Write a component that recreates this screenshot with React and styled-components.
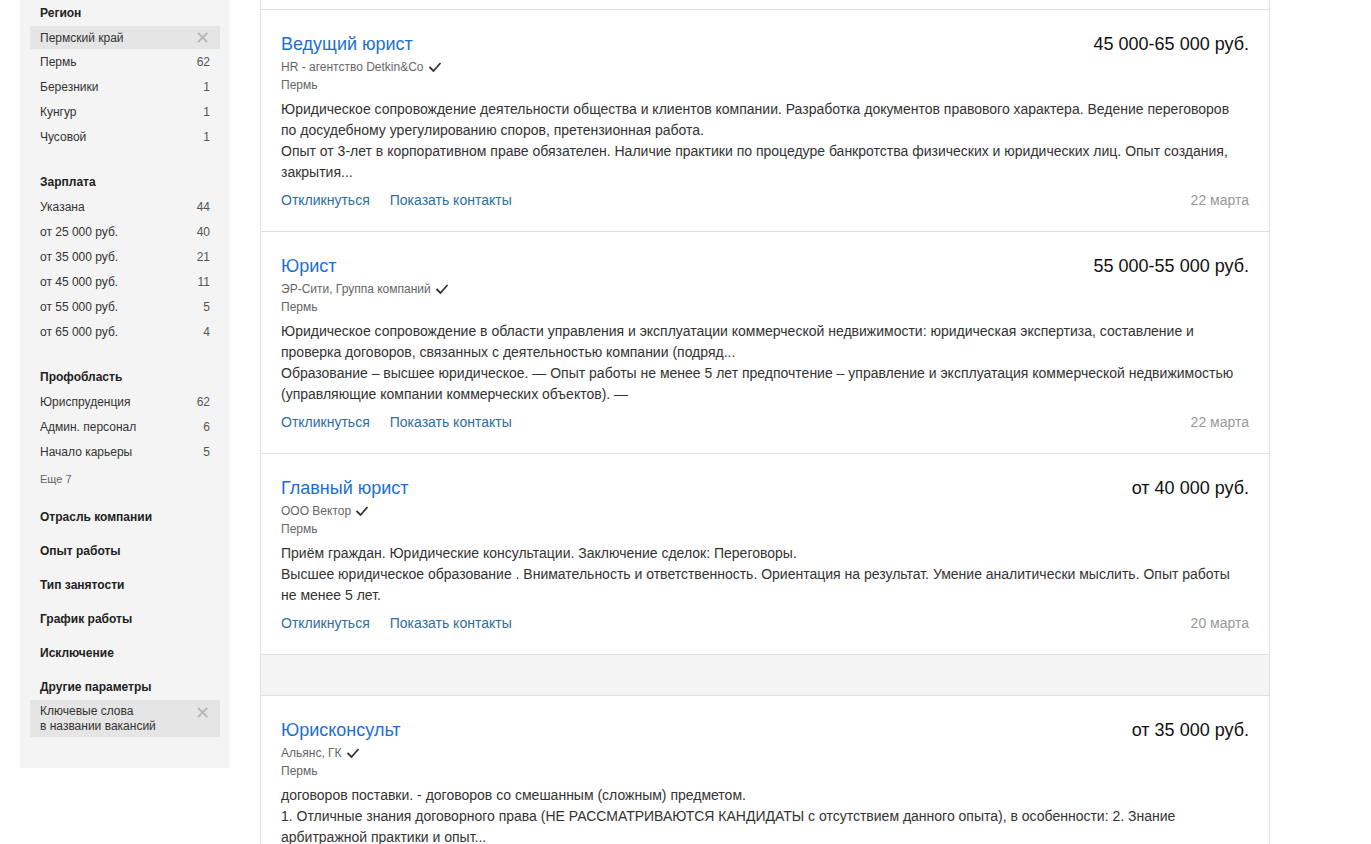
import React from 'react';
import styled, { createGlobalStyle } from 'styled-components';

const GlobalStyle = createGlobalStyle`
  body {
    margin: 0;
    background: #fff;
    font-family: "Liberation Sans", Arial, sans-serif;
    color: #333;
  }
`;

const Page = styled.div`
  display: flex;
  align-items: flex-start;
  padding-left: 20px;
  height: 844px;
  overflow: hidden;
`;

const Sidebar = styled.aside`
  width: 190px;
  flex-shrink: 0;
  background: #f4f4f4;
  padding: 0 10px 31px;
  margin-right: 30px;
`;

const Section = styled.div`
  margin-bottom: ${(p) => p.gap ?? 20}px;
`;

const Heading = styled.div`
  font-size: 12px;
  font-weight: bold;
  color: #222;
  padding: 2px 0 0 10px;
  line-height: ${(p) => (p.lh || 25) - 2}px;
  margin-top: ${(p) => p.mt || 0}px;
`;

const Row = styled.div`
  display: flex;
  justify-content: space-between;
  align-items: center;
  height: ${(p) => (p.active ? 23 : 25)}px;
  margin-top: ${(p) => (p.active ? 1 : 0)}px;
  padding: 0 10px;
  font-size: 12px;
  color: #333;
  background: ${(p) => (p.active ? '#e5e5e5' : 'transparent')};
`;

const Count = styled.span`
  color: #555;
`;

const Close = styled.span`
  color: #b5b5b5;
  font-size: 18px;
  line-height: 1;
  font-weight: 300;
`;

const More = styled.div`
  font-size: 11px;
  color: #666;
  padding-left: 10px;
  line-height: 30px;
  margin-bottom: 5px;
`;

const Chip = styled.div`
  display: flex;
  justify-content: space-between;
  align-items: flex-start;
  background: #e5e5e5;
  margin-top: 1px;
  padding: 4px 10px 3px;
  font-size: 12px;
  line-height: 15px;
  color: #333;
`;

const List = styled.main`
  width: 1008px;
  flex-shrink: 0;
  border-left: 1px solid #e0e0e0;
  border-right: 1px solid #e0e0e0;
  padding-top: 9px;
`;

const Card = styled.article`
  border-top: 1px solid #e0e0e0;
  padding: 23px 20px 21px;
`;

const Band = styled.div`
  border-top: 1px solid #e0e0e0;
  background: #f4f4f4;
  height: 40px;
`;

const Head = styled.div`
  display: flex;
  justify-content: space-between;
  align-items: center;
  height: 22px;
`;

const Title = styled.a`
  font-size: 18px;
  color: #1d6fcf;
  text-decoration: none;
`;

const Salary = styled.div`
  font-size: 18px;
  color: #111;
`;

const Company = styled.div`
  display: flex;
  align-items: center;
  gap: 4px;
  margin-top: 3px;
  font-size: 12px;
  line-height: 18px;
  color: #666;
`;

const City = styled.div`
  font-size: 12px;
  line-height: 18px;
  color: #666;
`;

const Desc = styled.div`
  margin-top: 5px;
  padding-right: 3px;
  font-size: 14px;
  line-height: 21px;
  color: #333;
`;

const Footer = styled.div`
  display: flex;
  align-items: center;
  margin-top: 7px;
  height: 20px;
  font-size: 14px;
`;

const Action = styled.a`
  color: #2d6ea0;
  margin-right: 20px;
  text-decoration: none;
`;

const Date = styled.span`
  margin-left: auto;
  color: #999;
`;

const Check = () => (
  <svg width="14" height="12" viewBox="0 0 14 12">
    <polyline points="1.5,6 5.5,10 12.5,2" fill="none" stroke="#333" strokeWidth="1.8" />
  </svg>
);

const vacancies = [
  {
    title: 'Ведущий юрист',
    salary: '45 000-65 000 руб.',
    company: 'HR - агентство Detkin&Co',
    desc: [
      'Юридическое сопровождение деятельности общества и клиентов компании. Разработка документов правового характера. Ведение переговоров по досудебному урегулированию споров, претензионная работа.',
      'Опыт от 3-лет в корпоративном праве обязателен. Наличие практики по процедуре банкротства физических и юридических лиц. Опыт создания, закрытия...',
    ],
    date: '22 марта',
  },
  {
    title: 'Юрист',
    salary: '55 000-55 000 руб.',
    company: 'ЭР-Сити, Группа компаний',
    desc: [
      'Юридическое сопровождение в области управления и эксплуатации коммерческой недвижимости: юридическая экспертиза, составление и проверка договоров, связанных с деятельностью компании (подряд...',
      'Образование – высшее юридическое. — Опыт работы не менее 5 лет предпочтение – управление и эксплуатация коммерческой недвижимостью (управляющие компании коммерческих объектов). —',
    ],
    date: '22 марта',
  },
  {
    title: 'Главный юрист',
    salary: 'от 40 000 руб.',
    company: 'ООО Вектор',
    desc: [
      'Приём граждан. Юридические консультации. Заключение сделок: Переговоры.',
      'Высшее юридическое образование . Внимательность и ответственность. Ориентация на результат. Умение аналитически мыслить. Опыт работы не менее 5 лет.',
    ],
    date: '20 марта',
  },
];

const last = {
  title: 'Юрисконсульт',
  salary: 'от 35 000 руб.',
  company: 'Альянс, ГК',
  desc: [
    'договоров поставки. - договоров со смешанным (сложным) предметом.',
    '1. Отличные знания договорного права (НЕ РАССМАТРИВАЮТСЯ КАНДИДАТЫ с отсутствием данного опыта), в особенности: 2. Знание арбитражной практики и опыт...',
  ],
};

function Vacancy({ v, noFooter }) {
  return (
    <Card>
      <Head>
        <Title href="#">{v.title}</Title>
        <Salary>{v.salary}</Salary>
      </Head>
      <Company>
        {v.company}
        <Check />
      </Company>
      <City>Пермь</City>
      <Desc>
        {v.desc.map((d, i) => (
          <div key={i}>{d}</div>
        ))}
      </Desc>
      {!noFooter && (
        <Footer>
          <Action href="#">Откликнуться</Action>
          <Action href="#">Показать контакты</Action>
          <Date>{v.date}</Date>
        </Footer>
      )}
    </Card>
  );
}

const salary = [
  ['Указана', 44],
  ['от 25 000 руб.', 40],
  ['от 35 000 руб.', 21],
  ['от 45 000 руб.', 11],
  ['от 55 000 руб.', 5],
  ['от 65 000 руб.', 4],
];

const collapsed = ['Отрасль компании', 'Опыт работы', 'Тип занятости', 'График работы', 'Исключение'];

export default function App() {
  return (
    <>
      <GlobalStyle />
      <Page>
        <Sidebar>
          <Section>
            <Heading>Регион</Heading>
            <Row active>
              Пермский край
              <Close>✕</Close>
            </Row>
            <Row>Пермь<Count>62</Count></Row>
            <Row>Березники<Count>1</Count></Row>
            <Row>Кунгур<Count>1</Count></Row>
            <Row>Чусовой<Count>1</Count></Row>
          </Section>
          <Section>
            <Heading>Зарплата</Heading>
            {salary.map(([name, n]) => (
              <Row key={name}>{name}<Count>{n}</Count></Row>
            ))}
          </Section>
          <Section gap={0}>
            <Heading>Профобласть</Heading>
            <Row>Юриспруденция<Count>62</Count></Row>
            <Row>Админ. персонал<Count>6</Count></Row>
            <Row>Начало карьеры<Count>5</Count></Row>
            <More>Еще 7</More>
          </Section>
          {collapsed.map((t) => (
            <Heading key={t} lh={34}>{t}</Heading>
          ))}
          <Heading mt={5}>Другие параметры</Heading>
          <Chip>
            <span>
              Ключевые слова
              <br />
              в названии вакансий
            </span>
            <Close>✕</Close>
          </Chip>
        </Sidebar>
        <List>
          {vacancies.map((v) => (
            <Vacancy key={v.title} v={v} />
          ))}
          <Band />
          <Vacancy v={last} noFooter />
        </List>
      </Page>
    </>
  );
}
